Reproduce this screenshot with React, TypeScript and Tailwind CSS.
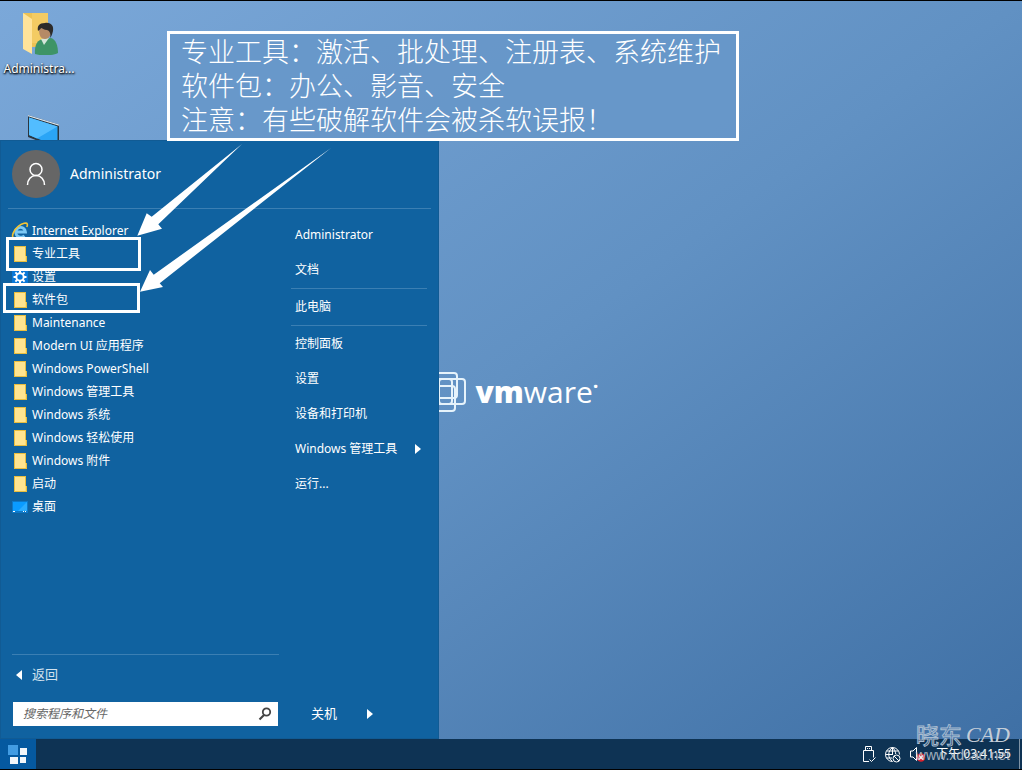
import { ReactNode, useState } from 'react'

type ProgramIcon = 'ie' | 'folder' | 'gear' | 'desktop'

const programs: { name: string; icon: ProgramIcon }[] = [
  { name: 'Internet Explorer', icon: 'ie' },
  { name: '专业工具', icon: 'folder' },
  { name: '设置', icon: 'gear' },
  { name: '软件包', icon: 'folder' },
  { name: 'Maintenance', icon: 'folder' },
  { name: 'Modern UI 应用程序', icon: 'folder' },
  { name: 'Windows PowerShell', icon: 'folder' },
  { name: 'Windows 管理工具', icon: 'folder' },
  { name: 'Windows 系统', icon: 'folder' },
  { name: 'Windows 轻松使用', icon: 'folder' },
  { name: 'Windows 附件', icon: 'folder' },
  { name: '启动', icon: 'folder' },
  { name: '桌面', icon: 'desktop' },
]

const placeGroups = [
  ['Administrator', '文档'],
  ['此电脑'],
  ['控制面板', '设置', '设备和打印机', 'Windows 管理工具', '运行...'],
]

const notes = [
  '专业工具：激活、批处理、注册表、系统维护',
  '软件包：办公、影音、安全',
  '注意：有些破解软件会被杀软误报！',
]

const iconMap: Record<ProgramIcon, ReactNode> = {
  ie: (
    <svg className="size-4 overflow-visible" viewBox="0 0 16 16" fill="none" aria-hidden="true">
      <path d="M4 9h9.500a4.900 4.900 0 1 0-1.200 3.600" stroke="#7cc9f5" strokeWidth="2.800" />
      <path
        d="M2.200 15.300C-1.500 14.500 1.500 7 6.500 3.200 10.500.2 14.700-.7 15.300 1c.3.9 0 2-.5 3"
        stroke="#f5c534"
        strokeWidth="1.600"
      />
    </svg>
  ),
  folder: (
    <svg className="size-4" viewBox="0 0 16 16" aria-hidden="true">
      <path d="M2 0h12v10h1v6H2z" fill="#e8bd3f" />
      <path d="M3 1h10v14H3z" fill="#ffe490" />
      <path d="M13 10h1v5h-1z" fill="#ffdb70" />
    </svg>
  ),
  gear: (
    <svg className="size-4" viewBox="0 0 16 16" aria-hidden="true">
      <path d="M0 0h16v16H0z" fill="#0878d8" />
      <circle cx="8" cy="8" r="3.700" fill="none" stroke="#fff" strokeWidth="2" />
      <path
        d="M8 1.500v2.500M8 12v2.500M1.500 8H4M12 8h2.500M3.400 3.400l1.800 1.800M10.800 10.800l1.800 1.800M3.400 12.600l1.800-1.800M10.800 5.200l1.800-1.800"
        stroke="#fff"
        strokeWidth="2"
      />
    </svg>
  ),
  desktop: (
    <svg className="size-4" viewBox="0 0 16 16" aria-hidden="true">
      <path d="M0 2h16v12H0z" fill="#0d78c8" />
      <path d="M1 3h14v9H1z" fill="#0a9bff" />
      <path d="M15 3v9H6z" fill="#2aacff" />
      <path d="M1 12.500h2M11 12.500h1M13 12.500h1" stroke="#fff" />
    </svg>
  ),
}

function UserFolderIcon() {
  return (
    <svg className="h-11 w-10" viewBox="0 0 40 44" aria-hidden="true">
      <path d="M4 2h25v34H4z" fill="#edc254" />
      <path d="M13 2h16v30H13z" fill="#f3cb63" />
      <path d="M4 2l9 6v35l-9-5z" fill="#ffe39a" />
      <path d="M16 43c-.5-8 1.500-14 8-15l8-1c5 1.500 7 8 7 15-6 3-17 3-23 1z" fill="#3e9467" />
      <path d="M22 28l3 6 5-7z" fill="#d5e5da" />
      <path d="M20 18c0 7 2 10 6 10s6-4 7-10l-5-4z" fill="#b58a66" />
      <path d="M19 20c-1-5 1-8 7-8 6-1 9 3 8 8-1 4-2 6-3 7 1-4 0-7-3-8-3 0-5-2-6-2 0 1-2 2-3 3z" fill="#2d2b29" />
    </svg>
  )
}

function ComputerIcon() {
  return (
    <svg className="h-10 w-10" viewBox="0 0 40 40" aria-hidden="true">
      <path d="M5 0l31 9.500V34L5 22z" fill="#2b3640" />
      <path d="M5 0l31 9.500v1.200L5 1.200z" fill="#dbe6ee" />
      <path d="M6 2.500l28.500 9V32L6 20z" fill="#2aa5f6" />
      <path d="M6 2.500l28.500 9L14 23.500 6 20z" fill="#52bdff" />
    </svg>
  )
}

function Caret({ flip = false }: { flip?: boolean }) {
  return (
    <svg className={flip ? 'h-3 w-1.5 rotate-180' : 'h-3 w-1.5'} viewBox="0 0 6 12" aria-hidden="true">
      <path d="M0 1l6 5-6 5z" fill="#fff" />
    </svg>
  )
}

function Wallpaper() {
  return (
    <div className="absolute inset-0 flex items-center justify-center gap-2 pt-11 text-white">
      <svg className="h-11 w-11" viewBox="0 0 44 44" fill="none" stroke="#e6f3fb" strokeWidth="2" aria-hidden="true">
        <rect x="3" y="9" width="26" height="25" rx="3" />
        <rect x="9" y="3" width="25" height="25" rx="3" />
        <rect x="16" y="9" width="26" height="25" rx="3" />
        <rect x="9" y="16" width="23" height="25" rx="3" />
      </svg>
      <p className="flex font-['Open_Sans',sans-serif] text-[30px] leading-10">
        <span className="font-extrabold">vm</span>
        <span className="font-medium">ware</span>
        <span className="text-xl leading-7 font-bold">·</span>
      </p>
    </div>
  )
}

function StartMenu() {
  const [query, setQuery] = useState('')

  return (
    <section
      aria-label="Start"
      className="absolute bottom-0 left-0 flex h-[599px] w-[439px] max-w-full flex-col bg-[#1062a0] inset-ring inset-ring-[#115b94]"
    >
      <header className="mx-2 flex items-center gap-2.5 border-b border-[#3b7fb3] px-1 py-2.5">
        <span className="flex size-12 items-center justify-center rounded-full bg-[#666]">
          <svg className="size-6" viewBox="0 0 24 24" fill="none" stroke="#fff" strokeWidth="1.500" aria-hidden="true">
            <circle cx="12" cy="7.500" r="6" />
            <path d="M3.500 23c0-5.500 3.500-9.500 8.500-9.500s8.500 4 8.500 9.500" />
          </svg>
        </span>
        <h1 className="text-sm">Administrator</h1>
      </header>
      <div className="flex min-h-0 flex-1">
        <div className="flex w-[291px] flex-col px-3">
          <ul className="flex-1 pt-2.5">
            {programs.map(program => (
              <li key={program.name}>
                <button type="button" className="flex h-[23px] w-full items-center gap-1 text-left">
                  {iconMap[program.icon]}
                  {program.name}
                </button>
              </li>
            ))}
          </ul>
          <button
            type="button"
            className="flex h-10 items-center gap-2.5 border-t border-[#3b7fb3] pl-1 text-[13px] text-[#d3e2ee]"
          >
            <Caret flip />
            返回
          </button>
          <form
            className="mx-px mt-2 mb-[13px] flex h-6 items-center bg-white pr-1.5 pl-2.5"
            onSubmit={e => e.preventDefault()}
          >
            <input
              type="text"
              aria-label="搜索程序和文件"
              placeholder="搜索程序和文件"
              value={query}
              onChange={e => setQuery(e.target.value)}
              className="min-w-0 flex-1 text-gray-900 italic outline-none placeholder:text-[#666]"
            />
            <button type="submit" aria-label="搜索">
              <svg className="size-3.5" viewBox="0 0 14 14" fill="none" stroke="#444" aria-hidden="true">
                <circle cx="8.500" cy="5" r="3.700" strokeWidth="1.800" />
                <path d="M6 8l-4.500 4.500" strokeWidth="2.200" />
              </svg>
            </button>
          </form>
        </div>
        <div className="flex flex-1 flex-col pr-3">
          <nav className="flex-1 pt-2">
            {placeGroups.map((group, groupIdx) => (
              <ul key={group[0]} className={groupIdx > 0 ? 'mt-px border-t border-[#3b7fb3]' : ''}>
                {group.map(place => (
                  <li key={place}>
                    <a href="#" className="flex h-[35px] items-center justify-between pr-1.5 pl-1">
                      {place}
                      {place === 'Windows 管理工具' && <Caret />}
                    </a>
                  </li>
                ))}
              </ul>
            ))}
          </nav>
          <div className="mb-[13px] flex h-6 items-center gap-[30px] pl-5">
            <button type="button" className="text-[13px]">
              关机
            </button>
            <button type="button" aria-label="更多选项">
              <Caret />
            </button>
          </div>
        </div>
      </div>
    </section>
  )
}

// Callout, frames and arrows drawn over the desktop
function Annotations() {
  return (
    <>
      <div className="absolute top-[30px] left-[167px] w-[572px] border-3 border-white bg-[#6797c9]/90 pb-0.5 pl-[11px] font-['Noto_Sans_CJK_SC',sans-serif] text-[27px] leading-[34px] font-light whitespace-nowrap">
        {notes.map(note => (
          <p key={note}>{note}</p>
        ))}
      </div>
      <div className="absolute top-[236px] left-1.5 h-[34px] w-[135px] border-3 border-white" />
      <div className="absolute top-[282px] left-[3px] h-[30px] w-[137px] border-3 border-white" />
      <svg
        className="pointer-events-none absolute top-[140px] left-[130px] h-[160px] w-[210px]"
        viewBox="130 141 210 160"
        fill="#fff"
        aria-hidden="true"
      >
        <path d="M242 144L151.700 216.700l-5-3.400-9.400 22.400 24.700-7-3.700-4.400z" />
        <path d="M331 148L153.700 274.700 150 270l-10 21.700 23-4.700-3.300-3.700z" />
      </svg>
    </>
  )
}

function Taskbar() {
  return (
    <footer className="flex h-[30px] shrink-0 items-center bg-[#0e3354]">
      <button type="button" aria-label="Start" className="flex h-full w-9 items-center justify-center bg-[#0559a0]">
        <svg className="size-5" viewBox="0 0 20 20" fill="#f2f6fa" aria-hidden="true">
          <path d="M0 1h10v10H0z" fill="#429ce3" />
          <path d="M12 4h7v7h-7zM2 13h8v8H2zM12 13h6v6h-6z" />
        </svg>
      </button>
      <div className="ml-auto flex h-full items-center gap-2">
        <svg className="h-[18px] w-3.5" viewBox="0 0 14 18" fill="none" stroke="#fff" aria-hidden="true">
          <path d="M3.500 5.500v-4h6v4M7 16.500H1.500v-11h10v7M5 3.500h1M7 3.500h1" />
          <path d="M7.500 14.500l2 2 4-4" />
        </svg>
        <svg className="size-[17px]" viewBox="0 0 17 17" fill="none" stroke="#fff" aria-hidden="true">
          <path d="M8.500 15.500a7 7 0 1 1 7-7M8.500 15.500c-5-4-5-10 0-14 2 2 3 4 3.200 6.500M1.500 8.500H9M2.500 5h12M2.500 12H8M8.500 1.500v7" />
          <circle cx="12.500" cy="12.500" r="3.500" />
          <path d="M10 10l5 5" />
        </svg>
        <svg className="h-[18px] w-[17px]" viewBox="0 0 17 18" fill="none" aria-hidden="true">
          <path d="M1.500 6v6h2.500l3.500 3.500v-13L4 6z" stroke="#fff" />
          <circle cx="12" cy="12.500" r="4.300" fill="#d8232f" />
          <path d="M10 10.500l4 4M14 10.500l-4 4" stroke="#fff" strokeWidth="1.300" />
        </svg>
        <time className="ml-0.5">下午 03:41:55</time>
        <span className="h-full w-[3px] border-l border-[#7f93a5]" />
      </div>
    </footer>
  )
}

export default function App() {
  return (
    <div className="relative flex h-screen flex-col overflow-hidden border-y border-black bg-[#5b8abc] font-['Noto_Sans','Noto_Sans_CJK_SC',sans-serif] text-xs text-white">
      <main className="relative min-h-0 flex-1 bg-linear-to-br from-[#7ba8d9] via-[#6191c3] to-[#3f70a5]">
        <Wallpaper />
        <div className="absolute top-2.5 left-0 flex w-[78px] flex-col items-center">
          <button type="button" className="flex w-full flex-col items-center text-shadow-[1px_1px_2px_#000,0_1px_2px_#000]">
            <UserFolderIcon />
            <span className="leading-7">Administra...</span>
          </button>
          <button type="button" aria-label="此电脑" className="mt-8 pl-2">
            <ComputerIcon />
          </button>
        </div>
        <StartMenu />
        <Annotations />
      </main>
      <Taskbar />
      <div className="pointer-events-none absolute right-3 bottom-1.5 text-right whitespace-nowrap text-[#c5ced8]">
        <p className="flex items-center justify-end gap-1 leading-6">
          <span className="text-[23px] text-transparent [-webkit-text-stroke:1px_#a9bdd1]">晓东</span>
          <span className="font-['Liberation_Serif',serif] text-[22px] italic">CAD</span>
        </p>
        <p className="font-['Liberation_Sans',sans-serif] text-sm leading-4 opacity-80">www.xdcad.net</p>
      </div>
    </div>
  )
}
